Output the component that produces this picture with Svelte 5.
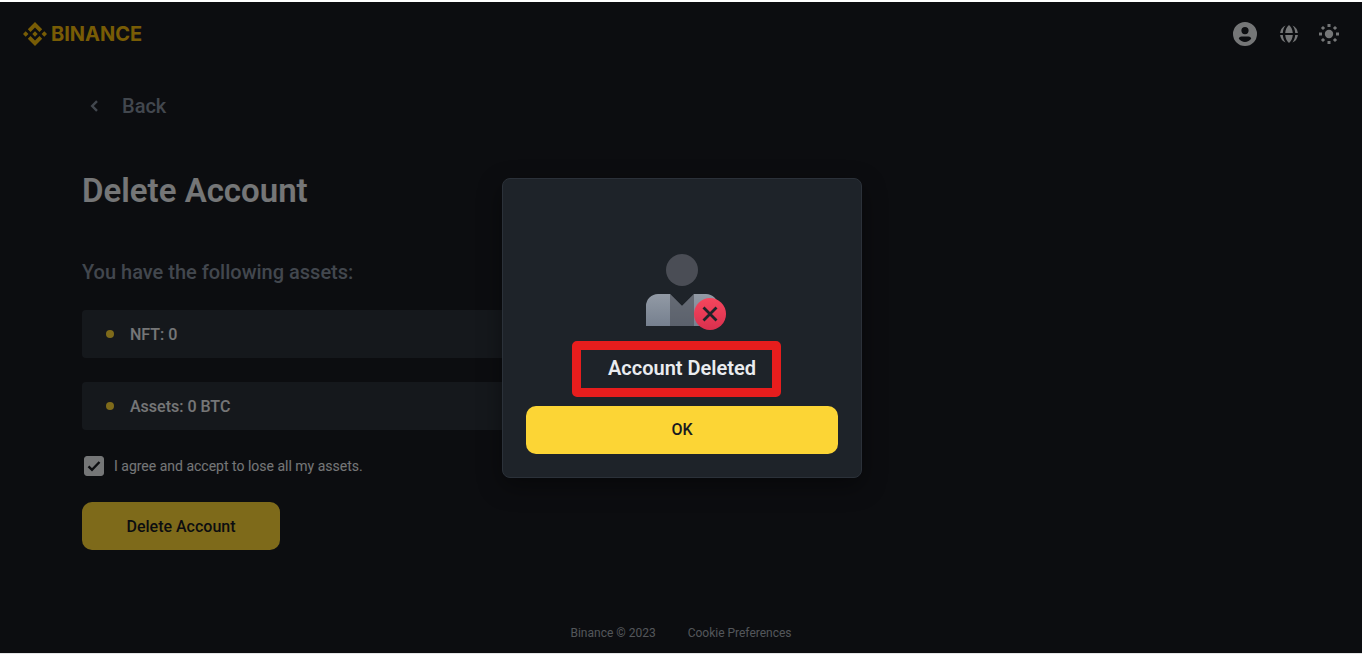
<script lang="ts">
    const assets = [
        { label: 'NFT', value: '0' },
        { label: 'Assets', value: '0 BTC' },
    ]

    let agreed = $state(true)
    let dialogOpen = $state(true)
</script>

<div class="page">
    <header class="topbar">
        <a class="brand" href="/">
            <svg width="24" height="24" viewBox="0 0 24 24" fill="currentColor" aria-hidden="true">
                <path d="M12 0l7.200 7.200-2.700 2.700L12 5.400 7.500 9.900 4.800 7.200z" />
                <path d="M12 24l7.200-7.200-2.700-2.700L12 18.600l-4.500-4.500-2.700 2.700z" />
                <path d="M2.700 9.300L5.400 12l-2.700 2.700L0 12zM21.300 9.300L24 12l-2.700 2.700-2.700-2.700zM12 9.300l2.700 2.700-2.700 2.700L9.300 12z" />
            </svg>
            <span>BINANCE</span>
        </a>
        <nav class="tools">
            <button class="tool" aria-label="Account">
                <svg width="24" height="24" viewBox="0 0 24 24" fill="currentColor">
                    <path fill-rule="evenodd" d="M12 0a12 12 0 110 24 12 12 0 010-24zm0 5a3.600 3.600 0 100 7.200A3.600 3.600 0 0012 5zM8.500 14.500c-1.600 0-2.700 1-2.700 2.300C7.200 18.700 9.500 20 12 20s4.800-1.300 6.200-3.200c0-1.300-1.100-2.300-2.700-2.300z" />
                </svg>
            </button>
            <button class="tool" aria-label="Language">
                <svg width="24" height="24" viewBox="0 0 24 24" fill="currentColor">
                    <path d="M8.600 3.600C6.900 5.500 6 8.200 5.800 11H3.100a9 9 0 015.500-7.400zM3.100 13h2.700c.2 2.800 1.100 5.500 2.800 7.400A9 9 0 013.100 13zM15.400 3.600a9 9 0 015.500 7.400h-2.700c-.2-2.800-1.100-5.500-2.800-7.400zM20.900 13a9 9 0 01-5.500 7.400c1.700-1.900 2.600-4.600 2.800-7.400zM12 3c2.100 1.500 3.500 4.500 3.800 8H8.200C8.500 7.500 9.900 4.500 12 3zM8.200 13h7.600c-.3 3.500-1.700 6.500-3.800 8-2.100-1.500-3.500-4.500-3.800-8z" />
                </svg>
            </button>
            <button class="tool" aria-label="Theme">
                <svg width="24" height="24" viewBox="0 0 24 24" fill="currentColor">
                    <circle cx="12" cy="12" r="4.200" />
                    <path d="M10.500 2h3v3h-3zM10.500 19h3v3h-3zM2 10.500h3v3H2zM19 10.500h3v3h-3z" />
                    <path d="M6 3.900L8.100 6 6 8.100 3.900 6zM18 3.900L20.100 6 18 8.100 15.900 6zM6 15.900L8.100 18 6 20.100 3.900 18zM18 15.900l2.100 2.100-2.100 2.100-2.100-2.100z" />
                </svg>
            </button>
        </nav>
    </header>

    <main class="content">
        <a class="back" href="/account">
            <svg width="24" height="24" viewBox="0 0 24 24" fill="none" stroke="currentColor" stroke-width="2.400" aria-hidden="true">
                <path d="M15 7.200L10.200 12l4.800 4.800" />
            </svg>
            Back
        </a>
        <h1>Delete Account</h1>
        <h2>You have the following assets:</h2>
        <ul class="assets">
            {#each assets as a}
                <li>{a.label}: {a.value}</li>
            {/each}
        </ul>
        <label class="agree">
            <input type="checkbox" bind:checked={agreed} />
            <svg class="tick" width="20" height="20" viewBox="0 0 20 20" fill="none" stroke-width="2.400" aria-hidden="true">
                <path d="M4.500 10.300l3.500 3.500 7.500-7.800" />
            </svg>
            <span>I agree and accept to lose all my assets.</span>
        </label>
        <button class="btn delete" disabled={!agreed} onclick={() => dialogOpen = true}>Delete Account</button>
    </main>

    <footer>
        <span>Binance © 2023</span>
        <a href="/cookies">Cookie Preferences</a>
    </footer>

    {#if dialogOpen}
        <div class="backdrop">
            <div class="dialog" role="dialog" aria-modal="true" aria-labelledby="dialog-title">
                <svg class="avatar" width="96" height="96" viewBox="0 0 96 96" aria-hidden="true">
                    <defs>
                        <linearGradient id="coat" x1="0" y1="0" x2="0" y2="1">
                            <stop offset="0" stop-color="#929aa5" />
                            <stop offset="1" stop-color="#76808f" />
                        </linearGradient>
                        <linearGradient id="cross" x1="0" y1="0" x2="0" y2="1">
                            <stop offset="0" stop-color="#f6465d" />
                            <stop offset="1" stop-color="#d9304e" />
                        </linearGradient>
                    </defs>
                    <circle cx="48" cy="28" r="16" fill="#4a4d55" />
                    <path d="M12 64a12 12 0 0112-12h12l12 12 12-12h12a12 12 0 0112 12v20H12z" fill="url(#coat)" />
                    <path d="M36 52l12 12 12-12v32H36z" fill="#4a4d55" fill-opacity=".6" />
                    <circle cx="76" cy="72" r="16" fill="url(#cross)" />
                    <path d="M69.500 65.500l13 13M82.500 65.500l-13 13" stroke="#1e2329" stroke-width="2.800" />
                </svg>
                <div class="heading">
                    <h3 id="dialog-title">Account Deleted</h3>
                    <span class="marker"></span>
                </div>
                <button class="btn ok" onclick={() => dialogOpen = false}>OK</button>
            </div>
        </div>
    {/if}
</div>

<style>
    :global(body) {
        margin: 0;
        background: #181a20;
    }
    .page {
        box-sizing: border-box;
        position: relative;
        min-height: 100vh;
        display: flex;
        flex-direction: column;
        border-top: 2px solid #fff;
        border-bottom: 1px solid #e4e5e6;
        background: #181a20;
        color: #eaecef;
        font-family: Roboto, "Liberation Sans", sans-serif;
    }
    a {
        color: inherit;
        text-decoration: none;
    }
    button {
        font-family: inherit;
        border: 0;
        cursor: pointer;
    }
    svg { display: block; }

    .topbar {
        display: flex;
        align-items: center;
        justify-content: space-between;
        height: 64px;
        padding: 0 21px 0 23px;
    }
    .brand {
        display: flex;
        align-items: center;
        gap: 4px;
        color: #f0b90b;
        font: 700 20px/24px Inter, sans-serif;
    }
    .tools {
        display: flex;
        gap: 16px;
    }
    .tool {
        padding: 0;
        background: none;
        color: inherit;
    }
    .tool:first-child { margin-right: 4px; }

    .content {
        flex: 1;
        display: flex;
        flex-direction: column;
        align-items: flex-start;
        padding: 26px 82px 0;
    }
    .back {
        display: flex;
        align-items: center;
        gap: 16px;
        color: #848e9c;
        font-size: 20px;
        font-weight: 500;
        line-height: 28px;
    }
    h1 {
        margin: 51px 0 0;
        font-size: 33px;
        font-weight: 600;
        line-height: 40px;
    }
    h2 {
        margin: 47px 0 0;
        color: #848e9c;
        font-size: 20px;
        font-weight: 500;
        line-height: 28px;
    }
    .assets {
        display: flex;
        flex-direction: column;
        gap: 24px;
        width: 100%;
        max-width: 600px;
        margin: 24px 0 0;
        padding: 0;
        list-style: none;
    }
    .assets li {
        display: flex;
        align-items: center;
        gap: 16px;
        height: 48px;
        padding: 0 24px;
        border-radius: 4px;
        background: #2b3139;
        font-size: 16px;
        font-weight: 500;
    }
    .assets li::before {
        content: '';
        width: 8px;
        height: 8px;
        border-radius: 50%;
        background: #fcd535;
    }
    .agree {
        display: grid;
        grid-template-columns: 20px auto;
        align-items: center;
        column-gap: 10px;
        margin: 26px 2px 0;
        font-size: 14px;
        line-height: 20px;
    }
    .agree input {
        appearance: none;
        grid-area: 1 / 1;
        width: 20px;
        height: 20px;
        margin: 0;
        border: 1px solid #eaecef;
        border-radius: 3px;
    }
    .agree input:checked { background: #eaecef; }
    .tick {
        grid-area: 1 / 1;
        stroke: #181a20;
        pointer-events: none;
    }
    .btn {
        height: 48px;
        border-radius: 10px;
        background: #fcd535;
        color: #181a20;
        font-size: 16px;
        font-weight: 500;
    }
    .delete {
        width: 198px;
        margin-top: 26px;
    }

    footer {
        display: flex;
        justify-content: center;
        gap: 32px;
        padding: 16px 0 12px;
        color: #a6acb4;
        font-size: 12px;
        line-height: 16px;
    }

    .backdrop {
        position: absolute;
        inset: 0;
        display: flex;
        align-items: center;
        justify-content: center;
        padding-left: 2px;
        background: rgba(0, 0, 0, 0.5);
    }
    .dialog {
        box-sizing: border-box;
        display: flex;
        flex-direction: column;
        align-items: center;
        width: 360px;
        padding: 63px 23px 23px;
        border: 1px solid #2b3139;
        border-radius: 8px;
        background: #1e2329;
        box-shadow: 0 8px 24px rgba(0, 0, 0, 0.4);
    }
    .heading {
        position: relative;
        margin: 16px 0 24px;
    }
    h3 {
        margin: 0;
        font-size: 20px;
        font-weight: 600;
        line-height: 28px;
    }
    .marker {
        position: absolute;
        inset: -13px -25px -15px -36px;
        border: 9px solid #e71d1d;
        border-radius: 5px;
        pointer-events: none;
    }
    .ok { width: 100%; }
</style>
